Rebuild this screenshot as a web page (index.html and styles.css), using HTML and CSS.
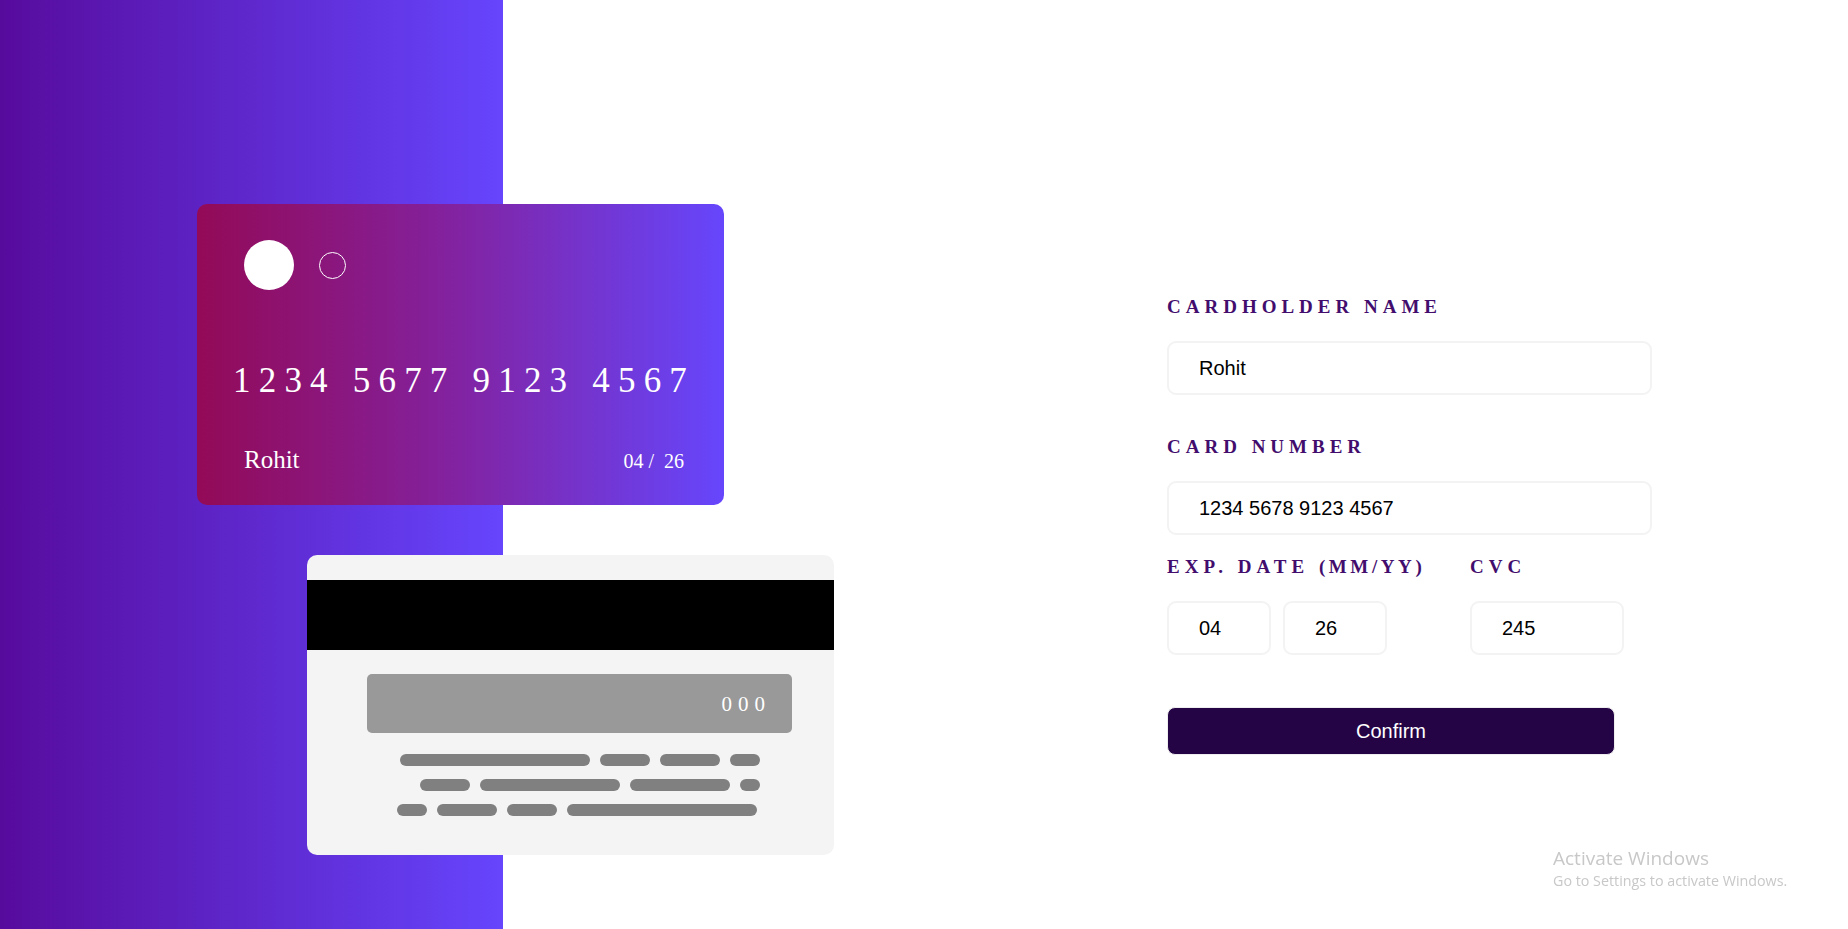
FILE: index.html
```html
<!DOCTYPE html>
<html lang="en">
<head>
<meta charset="utf-8">
<title>Card Details</title>
<link rel="stylesheet" href="styles.css">
</head>
<body>
<div class="page">
  <aside class="panel">
    <div class="cards">
      <div class="card-front">
        <div class="logo"><span class="dot"></span><span class="ring"></span></div>
        <div class="number">1234 5677 9123 4567</div>
        <div class="meta">
          <span class="name">Rohit</span>
          <span class="exp">04 / &nbsp;26</span>
        </div>
      </div>
      <div class="card-back">
        <div class="stripe"></div>
        <div class="sig"><span>000</span></div>
        <div class="lines">
          <div class="line-row r1"><i class="w190"></i><i class="w50"></i><i class="w60"></i><i class="w30"></i></div>
          <div class="line-row r2"><i class="w50"></i><i class="w140"></i><i class="w100"></i><i class="w20"></i></div>
          <div class="line-row r3"><i class="w30"></i><i class="w60"></i><i class="w50"></i><i class="w190"></i></div>
        </div>
      </div>
    </div>
  </aside>
  <main class="form-area">
    <form class="form">
      <label class="label">CARDHOLDER NAME</label>
      <input class="field" type="text" value="Rohit">
      <label class="label gap-lg">CARD NUMBER</label>
      <input class="field" type="text" value="1234 5678 9123 4567">
      <div class="split gap-sm">
        <div class="exp-col">
          <label class="label">EXP. DATE <span class="tight">(MM/YY)</span></label>
          <div class="pair">
            <input class="field small" type="text" value="04">
            <input class="field small" type="text" value="26">
          </div>
        </div>
        <div class="cvc-col">
          <label class="label">CVC</label>
          <input class="field cvc" type="text" value="245">
        </div>
      </div>
      <button class="confirm" type="button">Confirm</button>
    </form>
  </main>
</div>
<div class="watermark">
  <div class="wm-title">Activate Windows</div>
  <div class="wm-sub">Go to Settings to activate Windows.</div>
</div>
</body>
</html>
```
FILE: styles.css
```css
* { box-sizing: border-box; }
html, body { margin: 0; padding: 0; }
body {
  font-family: "Liberation Serif", "Times New Roman", serif;
  background: #ffffff;
  overflow: hidden;
}
.page {
  display: flex;
  width: 1848px;
  height: 929px;
}
.panel {
  width: 503px;
  flex: 0 0 503px;
  height: 929px;
  background: linear-gradient(to right, #570b9d, #6645fd);
}
.cards {
  padding: 204px 0 0 197px;
  width: 900px;
  position: relative;
  z-index: 1;
}
.card-front {
  width: 527px;
  height: 301px;
  border-radius: 10px;
  background: linear-gradient(to right, #930a57, #84209a 45%, #6646fc);
  padding: 36px 40px 0 47px;
  color: #fff;
}
.logo {
  display: flex;
  align-items: center;
  gap: 25px;
  height: 50px;
}
.dot {
  width: 50px;
  height: 50px;
  border-radius: 50%;
  background: #fff;
}
.ring {
  width: 27px;
  height: 27px;
  border-radius: 50%;
  border: 1px solid #fff;
}
.number {
  margin: 71px 0 0 -11px;
  font-size: 35px;
  line-height: 40px;
  letter-spacing: 8.2px;
  white-space: nowrap;
}
.meta {
  margin-top: 45px;
  display: flex;
  justify-content: space-between;
  align-items: baseline;
}
.name {
  font-size: 25px;
  line-height: 28px;
}
.exp {
  font-size: 20px;
}
.card-back {
  margin: 50px 0 0 110px;
  width: 527px;
  height: 300px;
  border-radius: 10px;
  background: #f4f4f4;
  padding-top: 25px;
}
.stripe {
  height: 70px;
  background: #000;
}
.sig {
  margin: 24px 0 0 60px;
  width: 425px;
  height: 59px;
  border-radius: 5px;
  background: #999999;
  display: flex;
  align-items: center;
  justify-content: flex-end;
  padding: 2px 21px 0 0;
  color: #fff;
  font-size: 21px;
  letter-spacing: 6px;
}
.lines {
  margin-top: 21px;
  display: flex;
  flex-direction: column;
  gap: 13px;
}
.line-row {
  display: flex;
  gap: 10px;
}
.line-row i {
  display: block;
  height: 12px;
  border-radius: 6px;
  background: #808080;
}
.r1 { margin-left: 93px; }
.r2 { margin-left: 113px; }
.r3 { margin-left: 90px; }
.w20 { width: 20px; }
.w30 { width: 30px; }
.w50 { width: 50px; }
.w60 { width: 60px; }
.w100 { width: 100px; }
.w140 { width: 140px; }
.w190 { width: 190px; }

.form-area {
  flex: 1;
  padding: 296px 0 0 664px;
}
.form {
  display: flex;
  flex-direction: column;
  align-items: flex-start;
}
.label {
  display: block;
  font-family: "Liberation Serif", "Times New Roman", serif;
  font-weight: bold;
  font-size: 19px;
  line-height: 22px;
  letter-spacing: 5px;
  color: #420d6d;
  white-space: nowrap;
}
.tight { letter-spacing: 3.6px; }
.field {
  display: block;
  margin-top: 23px;
  width: 485px;
  height: 54px;
  border: 2px solid #f3f3f3;
  border-radius: 9px;
  padding: 0 30px;
  font-family: "Liberation Sans", Arial, sans-serif;
  font-size: 20px;
  color: #000;
  background: #fff;
  outline: none;
}
.gap-lg { margin-top: 41px; }
.gap-sm { margin-top: 21px; }
.split {
  display: flex;
}
.exp-col { width: 303px; }
.pair {
  display: flex;
  gap: 12px;
}
.field.small { width: 104px; }
.field.cvc { width: 154px; }
.confirm {
  margin-top: 52px;
  width: 448px;
  height: 48px;
  border: 1px solid #eeeeee;
  border-radius: 8px;
  background: #250446;
  color: #fff;
  font-family: "Liberation Sans", Arial, sans-serif;
  font-size: 20px;
  padding: 0;
}
.watermark {
  position: fixed;
  left: 1553px;
  top: 845px;
  font-family: "Open Sans", "Noto Sans", sans-serif;
  color: #c8c8c8;
}
.wm-title {
  font-size: 19px;
  line-height: 26px;
}
.wm-sub {
  font-size: 14.3px;
  line-height: 20px;
}
```
